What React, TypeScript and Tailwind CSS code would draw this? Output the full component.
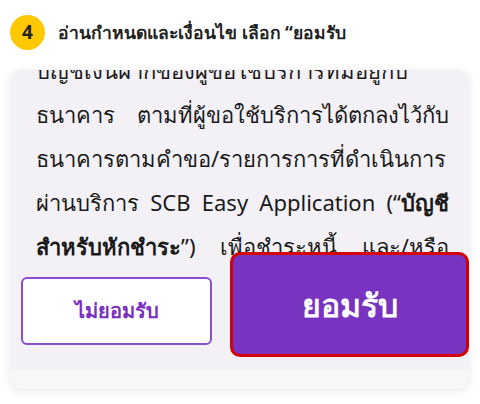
import React from "react";

const body = "font-['Noto_Sans','Liberation_Sans',sans-serif]";

export default function App() {
  return (
    <div className={`w-[480px] h-[404px] bg-white overflow-hidden ${body}`}>
      <div className="flex items-center pl-[10px] pt-[15px]">
        <div className="w-[35px] h-[35px] rounded-full bg-[#ffc800] flex items-center justify-center text-[19px] font-bold text-[#222]">
          4
        </div>
        <div className="ml-[13px] text-[17.5px] font-bold text-[#222] leading-none">
          อ่านกำหนดและเงื่อนไข เลือก “ยอมรับ
        </div>
      </div>

      <div className="mx-[10px] mt-[20px] w-[459px] h-[319px] rounded-[12px] bg-[#f7f7f8] shadow-[0_2px_10px_rgba(0,0,0,0.10)] overflow-hidden flex flex-col">
        <div className="bg-[#f3f1f6] h-[300px] flex flex-col">
          <div className="h-[192px] overflow-hidden pl-[26px] pr-[20px] text-[22px] leading-[44px] text-[#1a1a1a]">
            <div className="-mt-[22px]">
              <div className="[text-align-last:justify]">บัญชีเงินฝากของผู้ขอใช้บริการที่มีอยู่กับ</div>
              <div className="[text-align-last:justify]">ธนาคาร ตามที่ผู้ขอใช้บริการได้ตกลงไว้กับ</div>
              <div>ธนาคารตามคำขอ/รายการการที่ดำเนินการ</div>
              <div className="[text-align-last:justify]">
                ผ่านบริการ SCB Easy Application (“<span className="font-bold">บัญชี</span>
              </div>
              <div className="[text-align-last:justify]">
                <span className="font-bold">สำหรับหักชำระ</span>”) เพื่อชำระหนี้ และ/หรือ
              </div>
            </div>
          </div>
          <div className="flex items-start pl-[11px]">
            <button className="mt-[15px] w-[191px] h-[68px] rounded-[6px] border-2 border-[#8a4fd0] bg-white text-[20px] font-semibold text-[#7a2fc0] flex items-center justify-center">
              ไม่ยอมรับ
            </button>
            <button className="-mt-[10px] ml-[18px] w-[239px] h-[105px] rounded-[10px] border-[3px] border-[#d40000] bg-[#7833c0] text-[32px] font-bold text-white flex items-center justify-center">
              ยอมรับ
            </button>
          </div>
        </div>
      </div>
    </div>
  );
}
